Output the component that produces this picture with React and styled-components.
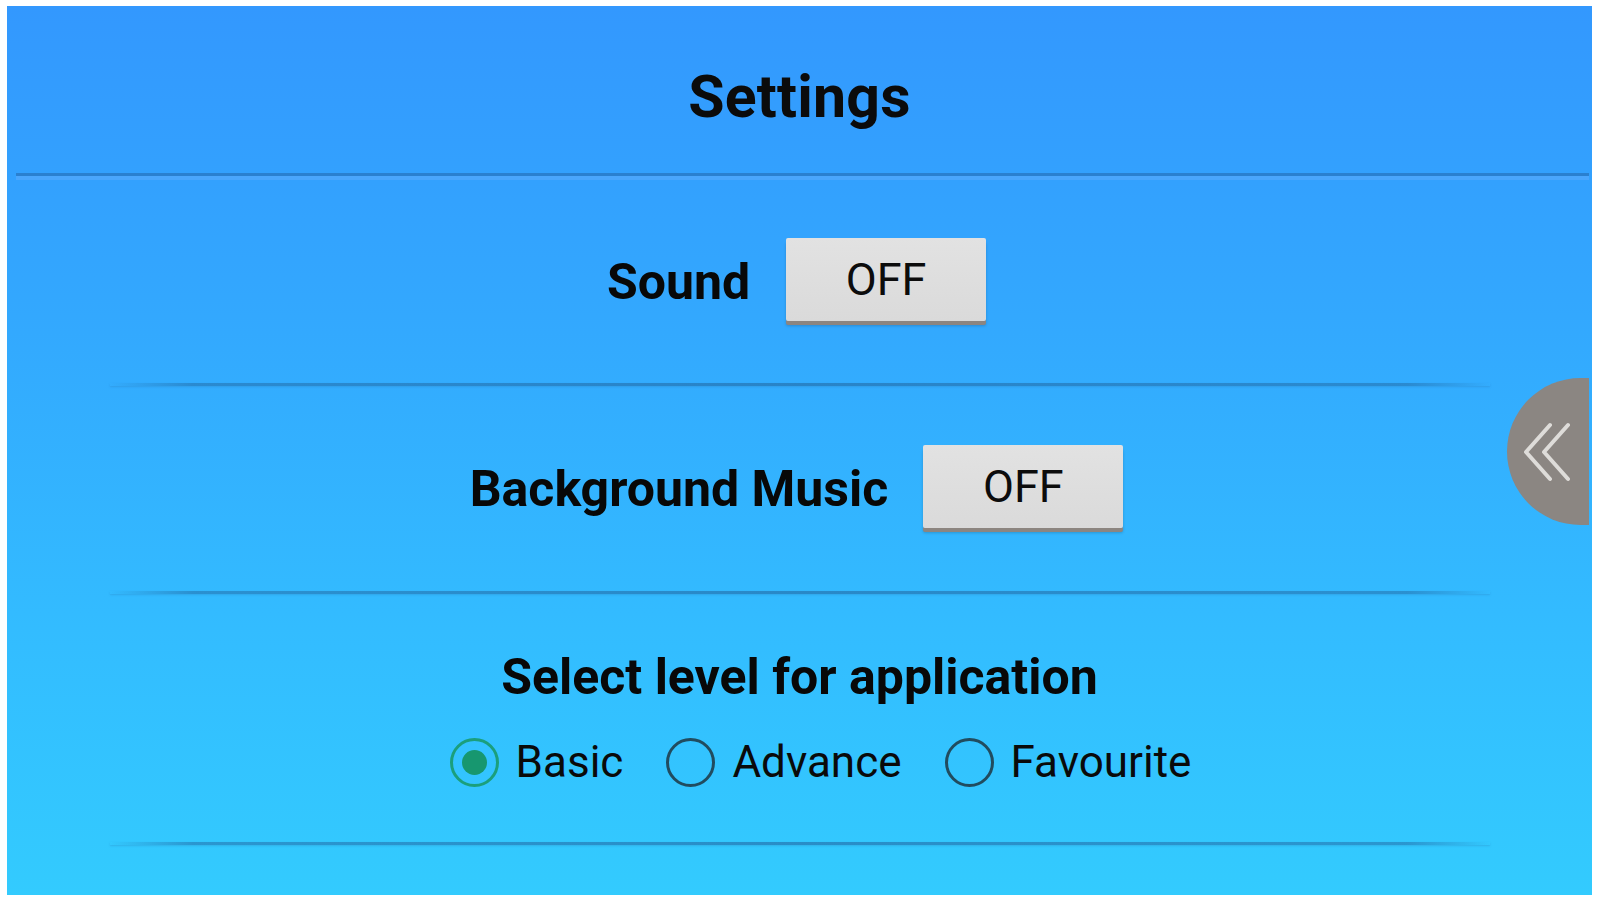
import React, { useState } from 'react';
import styled, { createGlobalStyle } from 'styled-components';

const GlobalStyle = createGlobalStyle`
  html, body {
    margin: 0;
    padding: 0;
    background: #ffffff;
  }
  body {
    font-family: Roboto, 'Liberation Sans', Arial, sans-serif;
  }
`;

const Frame = styled.div`
  width: 1600px;
  height: 900px;
  box-sizing: border-box;
  padding: 6px 8px 5px 7px;
`;

const Panel = styled.div`
  position: relative;
  height: 100%;
  display: flex;
  flex-direction: column;
  background: linear-gradient(180deg, #3398fe 0%, #33a8fe 35%, #33bcff 70%, #33cbfe 100%);
  overflow: hidden;
`;

const Header = styled.header`
  height: 167px;
  box-sizing: border-box;
  padding-top: 14px;
  display: flex;
  align-items: center;
  justify-content: center;
`;

const Title = styled.h1`
  margin: 0;
  font-size: 59px;
  font-weight: 700;
  color: #0b0b0b;
  letter-spacing: 0.2px;
`;

const HeaderRule = styled.div`
  margin: 0 3px 0 9px;
  height: 3px;
  background: #2a80d0;
  border-bottom: 4px solid #4aa6fd;
`;

const Row = styled.section`
  height: ${(p) => p.h}px;
  box-sizing: border-box;
  padding-right: ${(p) => p.shift || 0}px;
  display: flex;
  flex-direction: ${(p) => (p.column ? 'column' : 'row')};
  align-items: center;
  justify-content: center;
  gap: ${(p) => p.gap || 0}px;
`;

const Label = styled.span`
  font-size: 50px;
  font-weight: 700;
  color: #080808;
`;

const ToggleButton = styled.button`
  width: 200px;
  height: 83px;
  margin-bottom: 4px;
  border: none;
  border-radius: 2px;
  background: linear-gradient(180deg, #e2e2e2 0%, #dadada 100%);
  box-shadow: 0 4px 0 #8c8580, 0 5px 3px rgba(0, 0, 0, 0.18);
  font-family: Roboto, 'Liberation Sans', Arial, sans-serif;
  font-size: 45px;
  font-weight: 400;
  color: #0c0c0c;
  padding: 0;
  cursor: pointer;
`;

const Separator = styled.div`
  width: 1380px;
  height: 3px;
  margin: 0 auto;
  background: linear-gradient(
    90deg,
    rgba(35, 110, 170, 0) 0%,
    rgba(35, 110, 170, 0.55) 6%,
    rgba(35, 110, 170, 0.65) 50%,
    rgba(35, 110, 170, 0.55) 94%,
    rgba(35, 110, 170, 0) 100%
  );
  box-shadow: 0 1px 2px rgba(40, 110, 170, 0.25);
`;

const RadioGroup = styled.div`
  display: flex;
  align-items: center;
  padding-left: 42px;
  margin-top: 30px;
`;

const RadioOption = styled.label`
  display: flex;
  align-items: center;
  gap: 17px;
  margin-right: 43px;
  font-size: 44px;
  font-weight: 400;
  color: #0a0a0a;
  cursor: pointer;
  &:last-child {
    margin-right: 0;
  }
`;

const Ring = styled.span`
  width: 43px;
  height: 43px;
  border-radius: 50%;
  border: 3px solid ${(p) => (p.checked ? '#1b9f7c' : '#214c5f')};
  display: flex;
  align-items: center;
  justify-content: center;
  flex-shrink: 0;
  &::after {
    content: '';
    width: 25px;
    height: 25px;
    border-radius: 50%;
    background: #17976f;
    display: ${(p) => (p.checked ? 'block' : 'none')};
  }
`;

const SideTab = styled.div`
  position: absolute;
  right: 3px;
  top: 372px;
  width: 82px;
  height: 147px;
  background: #8b8682;
  border-radius: 74px 0 0 74px / 74px 0 0 74px;
  display: flex;
  align-items: center;
  justify-content: flex-end;
  padding-right: 16px;
  box-sizing: border-box;
`;

const levels = ['Basic', 'Advance', 'Favourite'];

const App = () => {
  const [sound, setSound] = useState(false);
  const [music, setMusic] = useState(false);
  const [level, setLevel] = useState('Basic');

  return (
    <Frame>
      <GlobalStyle />
      <Panel>
        <Header>
          <Title>Settings</Title>
        </Header>
        <HeaderRule />

        <Row h={203} gap={36} shift={6}>
          <Label>Sound</Label>
          <ToggleButton onClick={() => setSound(!sound)}>
            {sound ? 'ON' : 'OFF'}
          </ToggleButton>
        </Row>
        <Separator />

        <Row h={205} gap={35} shift={6}>
          <Label>Background Music</Label>
          <ToggleButton onClick={() => setMusic(!music)}>
            {music ? 'ON' : 'OFF'}
          </ToggleButton>
        </Row>
        <Separator />

        <Row h={248} column>
          <Label>Select level for application</Label>
          <RadioGroup>
            {levels.map((l) => (
              <RadioOption key={l} onClick={() => setLevel(l)}>
                <Ring checked={level === l} />
                {l}
              </RadioOption>
            ))}
          </RadioGroup>
        </Row>
        <Separator />

        <SideTab>
          <svg width="50" height="60" viewBox="0 0 50 60" fill="none">
            <path
              d="M27 3 L3 30 L27 57 M45 3 L21 30 L45 57"
              stroke="#dedcd9"
              strokeWidth="4"
              strokeLinecap="round"
              strokeLinejoin="round"
            />
          </svg>
        </SideTab>
      </Panel>
    </Frame>
  );
};

export default App;
